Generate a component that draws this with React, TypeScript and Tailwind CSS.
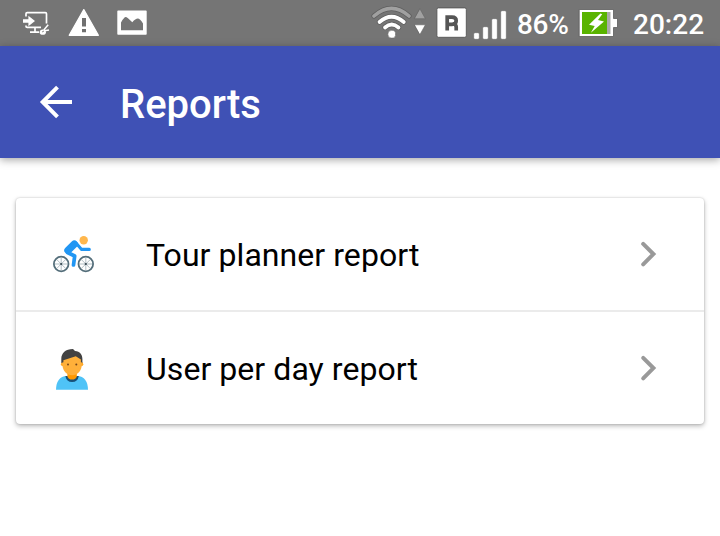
import React from 'react';

function ScreenCastIcon() {
  return (
    <svg className="h-[46px] w-[28px]" viewBox="22 0 28 46" fill="none" stroke="#fff" strokeWidth="1.7">
      <path d="M26 16.5V13.8Q26 12.6 27.2 12.6H45.3Q46.5 12.6 46.5 13.8V23.5M26 25.5V26.2Q26 27.4 27.2 27.4H41" />
      <path d="M35 28v4M30 32.2h9" />
      <path d="M23 19.2h5.4v-3.4l6.6 5.2-6.6 5.2v-3.4H23z" fill="#fff" stroke="none" />
      <path d="M48.2 24.8l-4.4 5.2M49 30l-6 1" strokeWidth="1.5" />
      <ellipse cx="42.8" cy="32.2" rx="3.1" ry="2.6" fill="#fff" stroke="none" />
      <path d="M42 32l2-1" stroke="#757575" strokeWidth=".8" />
    </svg>
  );
}

function WarningIcon() {
  return (
    <svg className="ml-[18px] h-[46px] w-[32px]" viewBox="68 0 32 46">
      <path d="M83.8 9.6L98.4 35.3H69.2z" fill="#fff" stroke="#fff" strokeWidth="1.2" strokeLinejoin="round" />
      <path d="M82 18h4v8.5h-4zM82 29h4v3.2h-4z" fill="#707070" />
    </svg>
  );
}

function PictureIcon() {
  return (
    <svg className="ml-[16px] h-[46px] w-[32px]" viewBox="116 0 32 46">
      <rect x="117.3" y="10.6" width="29.4" height="24.2" rx=".8" fill="#fff" />
      <path d="M121 30.2V22.5Q124 17 125.8 17Q127 17 132.3 22.2Q135.5 18.5 137.8 18.5Q140 18.5 143 23.5V30.2z" fill="#757575" />
    </svg>
  );
}

function WifiIcon() {
  return (
    <svg className="h-[46px] w-[58px]" viewBox="370 0 58 46" fill="none" strokeLinecap="round">
      <g stroke="#5e5e5e" strokeWidth="5.2">
        <path d="M374 16Q391.5 .8 409 16" />
        <path d="M379.5 22Q391.5 11.5 403.8 22" />
        <path d="M385 27.5Q391.7 21.5 398.5 27.5" />
      </g>
      <path d="M374 16Q391.5 .8 409 16" stroke="#a0a0a0" strokeWidth="3.6" />
      <path d="M379.5 22Q391.5 11.5 403.8 22M385 27.5Q391.7 21.5 398.5 27.5" stroke="#fff" strokeWidth="3.7" />
      <circle cx="391.8" cy="34.2" r="3.9" fill="#fff" stroke="#656565" strokeWidth=".5" />
      <path d="M420 9L425.4 18.7H414.6z" fill="#a0a0a0" stroke="#656565" strokeWidth=".6" />
      <path d="M420 34.5L425.4 24.8H414.6z" fill="#fff" stroke="#656565" strokeWidth=".6" />
    </svg>
  );
}

function RoamingIcon() {
  return (
    <svg className="ml-[8px] h-[46px] w-[32px]" viewBox="436 0 32 46">
      <rect x="436.9" y="7.9" width="29.4" height="29.4" rx="1.5" fill="#fff" stroke="#555" strokeWidth=".9" />
      <path d="M447.2 30.6V17.1H452Q456.2 17.1 456.2 20.8Q456.2 24.4 452 24.4H447.2M453.2 23.8Q456.2 24.6 456.2 27V30.6" fill="none" stroke="#555" strokeWidth="3.7" />
    </svg>
  );
}

function SignalIcon() {
  return (
    <svg className="ml-[4px] h-[46px] w-[36px]" viewBox="472 0 36 46" fill="#fff" stroke="#5e5e5e" strokeWidth=".5">
      <rect x="473.7" y="32.7" width="5.6" height="6.6" rx="1.4" />
      <rect x="482.7" y="26.7" width="5.6" height="12.6" rx="1.4" />
      <rect x="491.7" y="18.7" width="5.6" height="20.6" rx="1.4" />
      <rect x="500.7" y="10.7" width="5.6" height="28.6" rx="1.4" />
    </svg>
  );
}

function BatteryIcon() {
  return (
    <svg className="h-[46px] w-[42px]" viewBox="578 0 42 46">
      <path d="M579.2 9.5H613.5V18.5H617.5V27.5H613.5V36.5H579.2z" fill="#fff" stroke="#5c5c5c" strokeWidth=".8" />
      <path d="M582 12h25v22h-25z" fill="#59b300" />
      <path d="M607 12h3.5v22H607z" fill="#aaa" />
      <path d="M600.5 13.6L589 24.7l5.7 1.3-3.8 6.8L604 21.4l-6-1.4 4.2-5.7z" fill="#fff" />
    </svg>
  );
}

function StatusBar() {
  return (
    <div className="flex h-[46px] items-center bg-[#757575] pl-[22px] text-[28px] leading-[46px] font-medium text-white">
      <ScreenCastIcon />
      <WarningIcon />
      <PictureIcon />
      <div className="w-[222px]" />
      <WifiIcon />
      <RoamingIcon />
      <SignalIcon />
      <span className="ml-[9px] w-[61px] whitespace-nowrap pt-[3px] tracking-[-0.3px]">86%</span>
      <BatteryIcon />
      <span className="ml-[13px] whitespace-nowrap pt-[3px]">20:22</span>
    </div>
  );
}

function CyclistIcon() {
  return (
    <svg className="h-[42px] w-[44px]" viewBox="50 233 44 42" fill="none">
      <g stroke="#90a4ae" strokeWidth=".7">
        <path d="M61.2 257.8v12.4M55 264h12.4M56.8 259.6l8.8 8.8M65.6 259.6l-8.8 8.8" />
        <path d="M85.8 257.8v12.4M79.6 264h12.4M81.4 259.6l8.8 8.8M90.2 259.6l-8.8 8.8" />
      </g>
      <g stroke="#546e7a" strokeWidth="1.8">
        <circle cx="61.2" cy="264" r="7.3" />
        <circle cx="85.8" cy="264" r="7.3" />
      </g>
      <circle cx="61.2" cy="264" r="1.1" fill="#37474f" />
      <circle cx="85.8" cy="264" r="1.1" fill="#37474f" />
      <circle cx="83.7" cy="240.2" r="4.2" fill="#ffb74d" />
      <path d="M74.3 244.2L68 250.3" stroke="#2196f3" strokeWidth="7.4" strokeLinecap="round" />
      <path d="M76 243L81.6 249.4H89.3" stroke="#2196f3" strokeWidth="3.1" strokeLinecap="round" strokeLinejoin="round" />
      <path d="M67.5 252.5L74.7 256L73.5 265" stroke="#2196f3" strokeWidth="3.7" strokeLinecap="round" strokeLinejoin="round" />
    </svg>
  );
}

function PersonIcon() {
  return (
    <svg className="h-[44px] w-[44px]" viewBox="50 346 44 44">
      <path d="M56 389.8C56 382 59.5 376 67 376H77C84.5 376 88 382 88 389.8z" fill="#4fc3f7" />
      <path d="M65.4 376Q66.5 382 72.1 382T78.8 376z" fill="#175078" />
      <path d="M67.4 370h9.4v6.5Q76 379.6 72.1 379.6T67.4 376.5z" fill="#ff9800" />
      <circle cx="63" cy="364.2" r="2.1" fill="#ffa726" />
      <circle cx="81.2" cy="364.2" r="2.1" fill="#ffa726" />
      <path d="M62.5 357Q63 352 72 352T81.7 357V365C81.7 370.5 77.5 375.2 72.1 375.2S62.5 370.5 62.5 365z" fill="#ffb03a" />
      <circle cx="68" cy="364.5" r="1" fill="#784719" />
      <circle cx="76.3" cy="364.5" r="1" fill="#784719" />
      <path d="M61.3 363V358.8C61.3 353 65.5 348.9 73 348.9L75 351.1C80 351.4 82.4 355 82.4 359V363L80.9 362V359.4L75.8 356.2L63.4 360.2V362.2z" fill="#424242" />
    </svg>
  );
}

function Chevron() {
  return (
    <svg className="mr-[44px] ml-auto h-[32px] w-[24px]" viewBox="636 238 24 32" fill="none" stroke="#999" strokeWidth="4">
      <path d="M643.2 243.9L653.4 254.1L643.2 264.3" strokeLinecap="round" />
    </svg>
  );
}

function ReportRow({ icon, label }: { icon: React.ReactNode; label: string }) {
  return (
    <button className="flex h-[112px] w-full items-center pl-[34px] text-left">
      <span className="flex w-[96px] items-center">{icon}</span>
      <span className="whitespace-nowrap pt-[2px] text-[32px] leading-[38px] tracking-[0.06px]">{label}</span>
      <Chevron />
    </button>
  );
}

export default function App() {
  return (
    <div className="flex h-[536px] w-[720px] flex-col overflow-hidden bg-white font-['Roboto',sans-serif] text-black">
      <StatusBar />
      <header className="flex h-[112px] shrink-0 items-center bg-[#3f51b5] pl-[36px] text-white shadow-[0_2px_8px_rgba(0,0,0,0.35)]">
        <svg className="h-[40px] w-[40px]" viewBox="36 82 40 40" fill="none" stroke="#fff" strokeWidth="4">
          <path d="M72 102H43M57.5 87.2L42.7 102L57.5 116.8" />
        </svg>
        <h1 className="ml-[44px] pt-[6px] text-[40px] leading-[48px] font-medium">Reports</h1>
      </header>
      <main className="px-[16px] pt-[40px]">
        <div className="rounded-[4px] bg-white shadow-[0_2px_5px_rgba(0,0,0,0.28),0_0_2px_rgba(0,0,0,0.2)]">
          <ReportRow icon={<CyclistIcon />} label="Tour planner report" />
          <div className="h-[2px] bg-[#ebebeb]" />
          <ReportRow icon={<PersonIcon />} label="User per day report" />
        </div>
      </main>
    </div>
  );
}
